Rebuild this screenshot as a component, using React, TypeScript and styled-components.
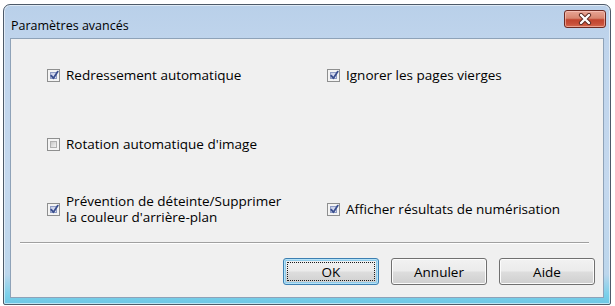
import React from "react";
import styled, { createGlobalStyle } from "styled-components";

const Global = createGlobalStyle`
  html, body { margin: 0; padding: 0; background: #ffffff; }
  body { font-family: "Open Sans", "Noto Sans", "DejaVu Sans", sans-serif; }
`;

const Window = styled.div`
  margin: 4px 0 0 3px;
  width: 608px;
  height: 301px;
  box-sizing: border-box;
  border: 1px solid #4d5a69;
  border-radius: 7px 7px 2px 2px;
  background: linear-gradient(180deg, #b9d0e9 0%, #bfd4ec 12%, #c4d8ee 60%, #bcd6ec 90%, #7ad0ea 97%, #6cc6e4 100%);
  display: flex;
  flex-direction: column;
  box-shadow: inset 0 0 0 1px rgba(255,255,255,0.55);
  overflow: hidden;
`;

const TitleBar = styled.div`
  height: 33px;
  display: flex;
  align-items: flex-start;
  justify-content: space-between;
  padding: 0 4px 0 7px;
  flex-shrink: 0;
`;

const Title = styled.span`
  font-size: 12.5px;
  color: #000;
  margin-top: 13px;
  line-height: 16px;
`;

const CloseButton = styled.div`
  margin-top: 5px;
  width: 42px;
  height: 18px;
  box-sizing: border-box;
  border: 1px solid #6d2a22;
  border-radius: 3px;
  background: linear-gradient(180deg, #e8a595 0%, #d88670 45%, #c1442e 55%, #c8503a 80%, #d66a4f 100%);
  box-shadow: inset 0 0 0 1px rgba(255,210,200,0.55);
  display: flex;
  align-items: center;
  justify-content: center;
`;

const Client = styled.div`
  flex: 1;
  margin: 0 6px 6px 6px;
  border: 1px solid #8ea2b8;
  background: #f0f0f0;
  display: flex;
  flex-direction: column;
`;

const Options = styled.div`
  display: grid;
  grid-template-columns: 280px auto;
  grid-template-rows: 69px 57px auto;
  padding: 28px 0 0 36px;
`;

const Option = styled.label`
  display: flex;
  align-items: center;
  gap: 6px;
  font-size: 13.5px;
  line-height: 16px;
  color: #000;
`;

const Box = styled.span<{ $checked: boolean }>`
  width: 13px;
  height: 13px;
  box-sizing: border-box;
  flex-shrink: 0;
  border: 1px solid #8e8f8f;
  background: #f4f4f4;
  padding: 2px;
  display: flex;
  span {
    flex: 1;
    border: 1px solid ${(p) => (p.$checked ? "#8f9cc4" : "#b0b0b0")};
    background: ${(p) =>
      p.$checked
        ? "linear-gradient(135deg, #c4cbe6 0%, #e9ebf6 100%)"
        : "linear-gradient(135deg, #c8c8c8 0%, #f2f2f2 100%)"};
    position: relative;
  }
  svg { position: absolute; left: -2px; top: -3px; }
`;

const Text = styled.span``;

const Separator = styled.div`
  margin: 17px 14px 0 9px;
  height: 1px;
  background: #a0a0a0;
  border-bottom: 1px solid #ffffff;
`;

const ButtonRow = styled.div`
  display: flex;
  justify-content: flex-end;
  gap: 12px;
  padding: 14px 8px 0 0;
`;

const Button = styled.div<{ $default?: boolean }>`
  width: 96px;
  height: 27px;
  box-sizing: border-box;
  border: 1px solid ${(p) => (p.$default ? "#3c7fb1" : "#707070")};
  border-radius: 3px;
  background: linear-gradient(180deg, #f2f2f2 0%, #ebebeb 48%, #dddddd 52%, #cfcfcf 100%);
  box-shadow: ${(p) =>
    p.$default ? "inset 0 0 0 1px #b6e3f8, inset 0 0 0 2px #8fcbea" : "inset 0 0 0 1px #fcfcfc"};
  display: flex;
  align-items: center;
  justify-content: center;
  font-size: 13.5px;
  color: #000;
  position: relative;
`;

const Focus = styled.span`
  position: absolute;
  inset: 3px;
  border: 1px dotted #1a1a1a;
  border-radius: 1px;
`;

const Check = ({ checked }: { checked: boolean }) => (
  <Box $checked={checked}>
    <span>
      {checked && (
        <svg width="11" height="11" viewBox="0 0 11 11">
          <path d="M2.2 5.6 L4.4 8.2 L8.8 1.6" fill="none" stroke="#3a4f8f" strokeWidth="1.8" strokeLinecap="round" strokeLinejoin="round" />
        </svg>
      )}
    </span>
  </Box>
);

const items: { label: React.ReactNode; checked: boolean; col: number; row: number }[] = [
  { label: "Redressement automatique", checked: true, col: 1, row: 1 },
  { label: "Ignorer les pages vierges", checked: true, col: 2, row: 1 },
  { label: "Rotation automatique d'image", checked: false, col: 1, row: 2 },
  {
    label: (
      <>
        Prévention de déteinte/Supprimer
        <br />
        la couleur d'arrière-plan
      </>
    ),
    checked: true,
    col: 1,
    row: 3,
  },
  { label: "Afficher résultats de numérisation", checked: true, col: 2, row: 3 },
];

const Cell = styled.div<{ $col: number; $row: number }>`
  grid-column: ${(p) => p.$col};
  grid-row: ${(p) => p.$row};
  display: flex;
  align-items: ${(p) => (p.$row === 3 ? "center" : "flex-start")};
  height: ${(p) => (p.$row === 3 ? "32px" : "auto")};
`;

export default function App() {
  return (
    <>
      <Global />
      <Window>
        <TitleBar>
          <Title>Paramètres avancés</Title>
          <CloseButton>
            <svg width="14" height="12" viewBox="0 0 14 12">
              <path d="M3 2 L11 10 M11 2 L3 10" stroke="#5a2a22" strokeWidth="4.2" strokeLinecap="round" />
              <path d="M3 2 L11 10 M11 2 L3 10" stroke="#ffffff" strokeWidth="2.4" strokeLinecap="round" />
            </svg>
          </CloseButton>
        </TitleBar>
        <Client>
          <Options>
            {items.map((it, i) => (
              <Cell key={i} $col={it.col} $row={it.row}>
                <Option>
                  <Check checked={it.checked} />
                  <Text>{it.label}</Text>
                </Option>
              </Cell>
            ))}
          </Options>
          <Separator />
          <ButtonRow>
            <Button $default>
              <Focus />
              OK
            </Button>
            <Button>Annuler</Button>
            <Button>Aide</Button>
          </ButtonRow>
        </Client>
      </Window>
    </>
  );
}
